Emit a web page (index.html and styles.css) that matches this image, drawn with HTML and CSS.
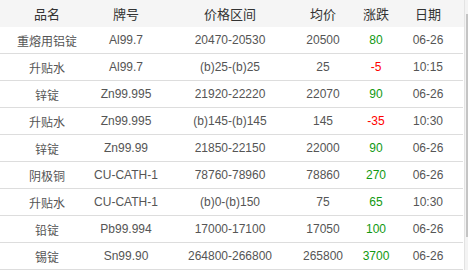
FILE: index.html
```html
<!DOCTYPE html>
<html>
<head>
  <meta charset="utf-8">
  <title>价格行情</title>
  <link rel="stylesheet" href="styles.css">
</head>
<body>
  <div class="panel">
    <div class="quotes">
      <div class="row head">
        <div>品名</div><div>牌号</div><div>价格区间</div><div>均价</div><div>涨跌</div><div>日期</div>
      </div>
      <div class="row">
        <div>重熔用铝锭</div><div>Al99.7</div><div>20470-20530</div><div>20500</div><div class="up">80</div><div>06-26</div>
      </div>
      <div class="row">
        <div>升贴水</div><div>Al99.7</div><div>(b)25-(b)25</div><div>25</div><div class="down">-5</div><div>10:15</div>
      </div>
      <div class="row">
        <div>锌锭</div><div>Zn99.995</div><div>21920-22220</div><div>22070</div><div class="up">90</div><div>06-26</div>
      </div>
      <div class="row">
        <div>升贴水</div><div>Zn99.995</div><div>(b)145-(b)145</div><div>145</div><div class="down">-35</div><div>10:30</div>
      </div>
      <div class="row">
        <div>锌锭</div><div>Zn99.99</div><div>21850-22150</div><div>22000</div><div class="up">90</div><div>06-26</div>
      </div>
      <div class="row">
        <div>阴极铜</div><div>CU-CATH-1</div><div>78760-78960</div><div>78860</div><div class="up">270</div><div>06-26</div>
      </div>
      <div class="row">
        <div>升贴水</div><div>CU-CATH-1</div><div>(b)0-(b)150</div><div>75</div><div class="up">65</div><div>10:30</div>
      </div>
      <div class="row">
        <div>铅锭</div><div>Pb99.994</div><div>17000-17100</div><div>17050</div><div class="up">100</div><div>06-26</div>
      </div>
      <div class="row">
        <div>锡锭</div><div>Sn99.90</div><div>264800-266800</div><div>265800</div><div class="up">3700</div><div>06-26</div>
      </div>
    </div>
    <div class="scroll-track">
      <div class="scroll-thumb"></div>
    </div>
  </div>
</body>
</html>
```

FILE: styles.css
```css
body {
  margin: 0;
  background: #fff;
  font-family: Arial, "Liberation Sans", "Noto Sans CJK SC", sans-serif;
  font-size: 12px;
  color: #555;
}

.panel {
  display: flex;
  height: 270px;
  overflow: hidden;
}

.quotes {
  width: 464px;
  flex: none;
}

.row {
  display: grid;
  grid-template-columns: 94px 64px 144px 42px 64px 40px 16px;
  height: 26px;
  align-items: center;
  border-bottom: 1px solid #ddd;
  margin-right: 1px;
  white-space: nowrap;
}

.row div {
  text-align: center;
  display: flex;
  justify-content: center;
}

.row.head {
  height: 27px;
  border-bottom: none;
  margin-right: 0;
  background: #f5f5f5;
  color: #333;
  font-size: 13px;
}

.up {
  color: #119911;
}

.down {
  color: #ff0000;
}

.scroll-track {
  flex: 1;
  border-left: 1px solid #e3e3e3;
  background: #f3f3f3;
  display: flex;
  flex-direction: column;
  align-items: flex-end;
}

.scroll-thumb {
  margin-top: 14px;
  width: 2px;
  height: 223px;
  background: #c4c4c4;
}
```
